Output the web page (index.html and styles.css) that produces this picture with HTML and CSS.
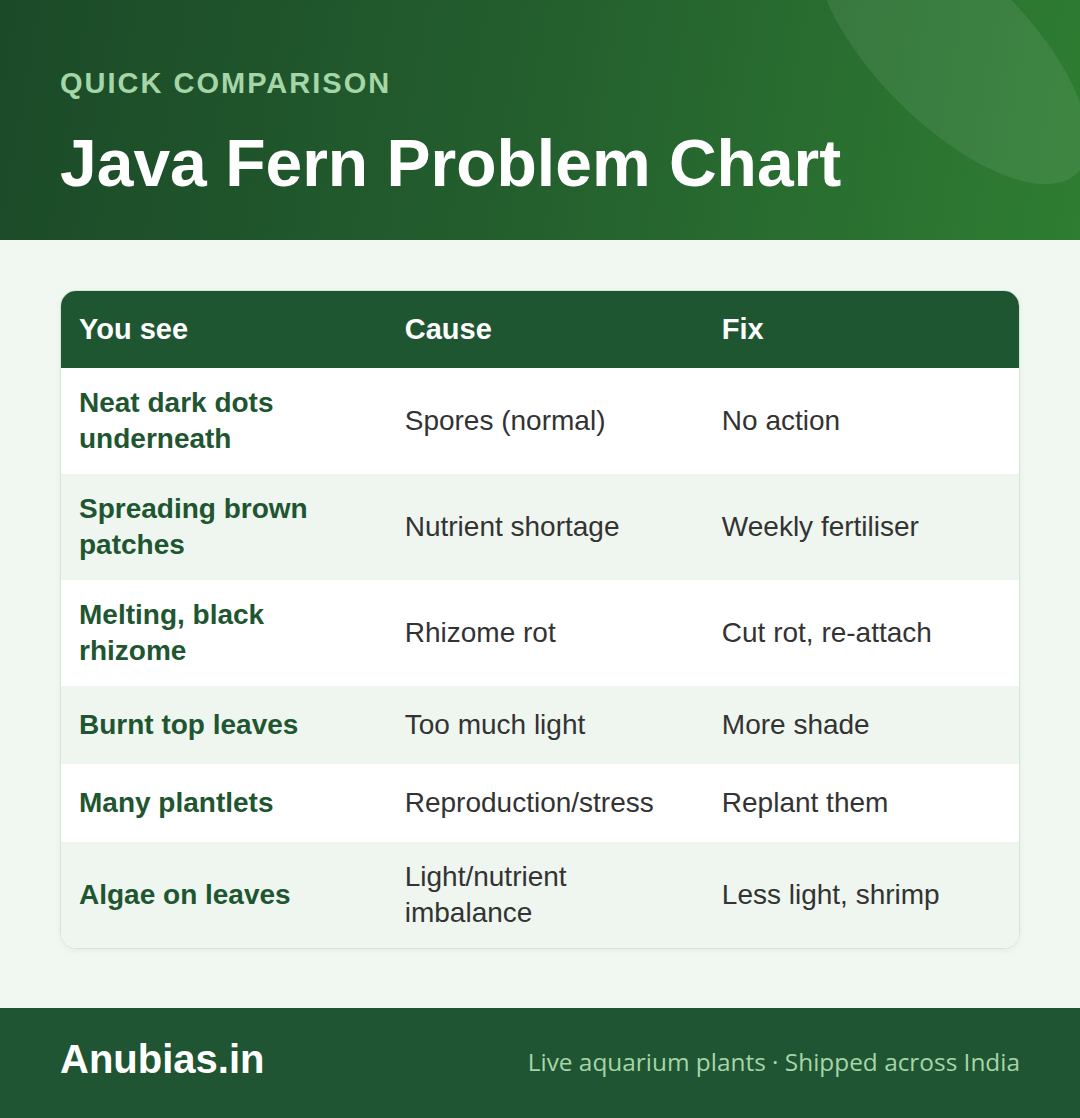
FILE: index.html
```html
<!DOCTYPE html>
<html lang="en">
<head>
<meta charset="utf-8">
<title>Java Fern Problem Chart</title>
<link rel="stylesheet" href="styles.css">
</head>
<body>
<div class="page">
  <header class="hero">
    <div class="hero-shape"></div>
    <div class="eyebrow">QUICK COMPARISON</div>
    <h1 class="title">Java Fern Problem Chart</h1>
  </header>

  <main class="content">
    <div class="card">
      <table class="chart">
        <colgroup>
          <col class="col-see">
          <col class="col-cause">
          <col class="col-fix">
        </colgroup>
        <thead>
          <tr>
            <th>You see</th>
            <th>Cause</th>
            <th>Fix</th>
          </tr>
        </thead>
        <tbody>
          <tr>
            <td class="symptom">Neat dark dots underneath</td>
            <td>Spores (normal)</td>
            <td>No action</td>
          </tr>
          <tr>
            <td class="symptom">Spreading brown patches</td>
            <td>Nutrient shortage</td>
            <td>Weekly fertiliser</td>
          </tr>
          <tr>
            <td class="symptom">Melting, black rhizome</td>
            <td>Rhizome rot</td>
            <td>Cut rot, re-attach</td>
          </tr>
          <tr>
            <td class="symptom">Burnt top leaves</td>
            <td>Too much light</td>
            <td>More shade</td>
          </tr>
          <tr>
            <td class="symptom">Many plantlets</td>
            <td>Reproduction/stress</td>
            <td>Replant them</td>
          </tr>
          <tr>
            <td class="symptom">Algae on leaves</td>
            <td>Light/nutrient imbalance</td>
            <td>Less light, shrimp</td>
          </tr>
        </tbody>
      </table>
    </div>
  </main>

  <footer class="footer">
    <div class="brand">Anubias.in</div>
    <div class="tagline">Live aquarium plants · Shipped across India</div>
  </footer>
</div>
</body>
</html>
```

FILE: styles.css
```css
* {
  box-sizing: border-box;
}

html, body {
  margin: 0;
  padding: 0;
}

body {
  width: 1080px;
  height: 1118px;
  background: #f1f8f1;
  font-family: "Liberation Sans", Arial, sans-serif;
  color: #333333;
}

.page {
  display: flex;
  flex-direction: column;
  height: 1118px;
}

/* Hero */
.hero {
  position: relative;
  overflow: hidden;
  flex: 0 0 240px;
  height: 240px;
  padding: 66px 60px 0;
  background: linear-gradient(100deg, #1b4a28 0%, #245f2e 50%, #2e7d32 100%);
}

.hero-shape {
  position: absolute;
  left: 775px;
  top: -28px;
  width: 354px;
  height: 152px;
  border-radius: 50%;
  background: rgba(255, 255, 255, 0.08);
  transform: rotate(45deg);
}

.eyebrow {
  position: relative;
  font-size: 29px;
  line-height: 34px;
  font-weight: 700;
  letter-spacing: 2px;
  color: #a5d6a7;
  margin-bottom: 27px;
}

.title {
  position: relative;
  margin: 0;
  font-size: 66px;
  line-height: 72px;
  font-weight: 700;
  color: #ffffff;
}

/* Content */
.content {
  flex: 1 1 auto;
  padding: 50px 60px 0;
}

.card {
  border: 1px solid #d5e6d7;
  border-radius: 16px;
  overflow: hidden;
  background: #ffffff;
  box-shadow: 0 2px 6px rgba(30, 86, 49, 0.06);
}

.chart {
  width: 100%;
  border-collapse: collapse;
  table-layout: fixed;
}

.col-see {
  width: 34%;
}

.col-cause {
  width: 33.1%;
}

.col-fix {
  width: 32.9%;
}

.chart th {
  height: 77px;
  padding: 0 18px;
  text-align: left;
  vertical-align: middle;
  background: #1f5632;
  color: #ffffff;
  font-size: 29px;
  font-weight: 700;
}

.chart td {
  height: 78px;
  padding: 17px 18px;
  vertical-align: middle;
  font-size: 28px;
  line-height: 36px;
  color: #333333;
}

.chart tbody tr:nth-child(even) td {
  background: #eff6ef;
}

.chart td.symptom {
  color: #1f5632;
  font-weight: 700;
}

/* Footer */
.footer {
  flex: 0 0 110px;
  height: 110px;
  padding: 0 60px 8px;
  display: flex;
  align-items: center;
  justify-content: space-between;
  background: #1f5532;
}

.brand {
  font-size: 40px;
  font-weight: 700;
  color: #ffffff;
}

.tagline {
  font-family: "Open Sans", "Noto Sans", sans-serif;
  font-size: 24.4px;
  color: #a5d6a7;
  margin-top: 4px;
}
```
